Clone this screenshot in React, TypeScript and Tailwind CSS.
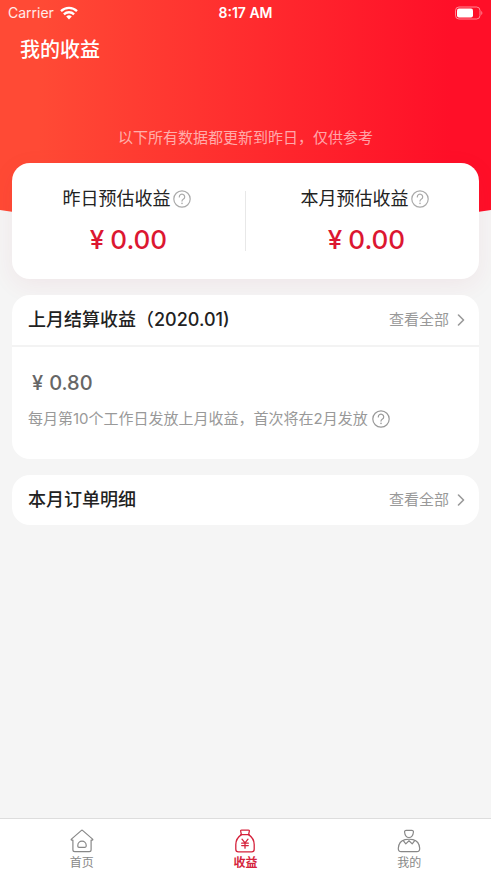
import { useState } from 'react'
import type { ReactNode } from 'react'

type TabKey = 'home' | 'income' | 'mine'

const HelpIcon = () => (
  <svg className="h-[18px] w-[18px]" viewBox="0 0 18 18" fill="none" stroke="currentColor" strokeWidth={1.2} strokeLinecap="round" strokeLinejoin="round">
    <circle cx="9" cy="9" r="8.2" />
    <path d="M6.3 6.9a2.7 2.7 0 1 1 4.200 2.200c-1 .600-1.500 1-1.500 2" />
    <path d="M9 13.3v.2" strokeWidth={1.5} />
  </svg>
)

const ChevronIcon = () => (
  <svg className="h-3 w-2" viewBox="0 0 8 12" fill="none" stroke="currentColor" strokeWidth={1.6} strokeLinecap="round" strokeLinejoin="round">
    <path d="M1.5 1 6.5 6l-5 5" />
  </svg>
)

const HomeIcon = () => (
  <svg className="h-6 w-6" viewBox="0 0 24 24" fill="none" stroke="currentColor" strokeWidth={1.2} strokeLinecap="round" strokeLinejoin="round">
    <path d="M11.2 1.6a1.2 1.2 0 0 1 1.6 0l9.8 8.5c.5.5.3 1.1-.4 1.1h-1.1v9.6c0 1.2-.7 1.9-1.9 1.9H4.8c-1.2 0-1.9-.7-1.9-1.9v-9.6H1.8c-.7 0-.9-.6-.4-1.1Z" />
    <path d="M9 18.3c-.8 0-1.2-.4-1.2-1.2v-.7a4.2 4.2 0 0 1 8.4 0v.7c0 .8-.4 1.2-1.2 1.2Z" />
  </svg>
)

const MoneyBagIcon = () => (
  <svg className="h-6 w-6" viewBox="0 0 24 24" fill="none" stroke="currentColor" strokeWidth={1.3} strokeLinecap="round" strokeLinejoin="round">
    <path d="M8.4 5.6 7.7 2.4c-.2-.8.1-1.3.9-1.3h6.8c.8 0 1.1.5.9 1.3l-.7 3.2" />
    <path d="M7.9 5.6h8.2" />
    <path d="M8.4 5.6C4.8 8 2.8 11.6 2.8 15.6v4.6c0 1.7.9 2.6 2.6 2.6h13.2c1.7 0 2.6-.9 2.6-2.6v-4.6c0-4-2-7.6-5.6-10" />
    <path d="m9 10.2 3 3.6 3-3.6M12 13.8v5.4M8.7 14.2h6.6M8.7 16.6h6.6" />
  </svg>
)

const UserIcon = () => (
  <svg className="h-6 w-6" viewBox="0 0 24 24" fill="none" stroke="currentColor" strokeWidth={1.2} strokeLinecap="round" strokeLinejoin="round">
    <path d="M9.3 1.3h5.4c1.3 0 1.9.7 1.7 1.9-.3 2.7-1.7 5.3-4.4 5.3S7.9 5.9 7.6 3.2c-.2-1.2.4-1.9 1.7-1.9Z" />
    <path d="M8 10.7c-4 1-6.4 4.4-6.7 8.6-.1 2.2.9 3.4 3 3.4h15.4c2.1 0 3.1-1.2 3-3.4-.3-4.2-2.7-7.6-6.7-8.6-2.6-.6-5.4-.6-8 0Z" />
    <path d="m6.3 11.7 2.5 3.2L12 11.8l3.2 3.1 2.5-3.2" />
  </svg>
)

const StatusBar = () => (
  <div className="grid h-[26px] grid-cols-3 items-center px-2 text-sm leading-6">
    <div className="flex items-center gap-1.5">
      <span className="text-white/90">Carrier</span>
      <svg className="h-3.5 w-[18px]" viewBox="0 0 18 14" fill="none" stroke="currentColor" strokeWidth={2.3}>
        <path d="M1 5.1a11.5 11.5 0 0 1 16 0" />
        <path d="M3.9 8.3a7.4 7.4 0 0 1 10.2 0" />
        <path d="M9 13.4 6.2 10.6a4.2 4.2 0 0 1 5.6 0Z" fill="currentColor" stroke="none" />
      </svg>
    </div>
    <span className="text-center font-semibold">8:17 AM</span>
    <svg className="h-3.5 w-7 justify-self-end" viewBox="0 0 28 14" fill="none">
      <rect x="0.5" y="1" width="24.5" height="12" rx="3.5" stroke="white" strokeOpacity={0.5} />
      <rect x="2" y="2.5" width="16" height="9" rx="2" fill="white" />
      <path d="M26.3 5v4c1.4-.8 1.4-3.2 0-4Z" fill="white" fillOpacity={0.5} />
    </svg>
  </div>
)

const EstimateItem = ({ label, amount }: { label: string; amount: string }) => (
  <div className="flex flex-1 flex-col items-center">
    <div className="flex items-center gap-0.5">
      <span className="text-lg leading-6 text-[#222]">{label}</span>
      <button type="button" aria-label={`${label}说明`} className="text-[#aaa]">
        <HelpIcon />
      </button>
    </div>
    <p className="mt-3 flex items-baseline gap-1.5 pl-1 text-[26px] leading-[34px] font-medium text-[#dc1731]">
      <span>¥</span>
      <span>{amount}</span>
    </p>
  </div>
)

const SectionHeader = ({ title }: { title: string }) => (
  <div className="flex h-[50px] items-center justify-between pr-3.5 pl-4">
    <h2 className="text-lg leading-6 font-medium text-[#222]">{title}</h2>
    <a href="#all" className="flex items-center gap-2 text-[15px] leading-6 text-[#999]">
      查看全部
      <ChevronIcon />
    </a>
  </div>
)

const tabs: { key: TabKey; label: string; icon: ReactNode }[] = [
  { key: 'home', label: '首页', icon: <HomeIcon /> },
  { key: 'income', label: '收益', icon: <MoneyBagIcon /> },
  { key: 'mine', label: '我的', icon: <UserIcon /> },
]

const App = () => {
  const [activeTab, setActiveTab] = useState<TabKey>('income')

  return (
    <div className="flex min-h-screen flex-col bg-[#f5f5f5] font-[Inter,'Noto_Sans_CJK_SC',sans-serif]">
      <header className="relative isolate overflow-hidden pb-[72px] text-white">
        <svg className="absolute inset-0 -z-10 h-full w-full" viewBox="0 0 491 222" preserveAspectRatio="none">
          <defs>
            <linearGradient id="headerFill" x1="0" y1="0" x2="1" y2="0">
              <stop offset="0.08" stopColor="#ff4a35" />
              <stop offset="0.92" stopColor="#ff0f28" />
            </linearGradient>
          </defs>
          <path d="M0 0H491V210Q245 250 0 210Z" fill="url(#headerFill)" />
        </svg>
        <StatusBar />
        <h1 className="mt-2.5 px-5 text-xl leading-7 font-medium">我的收益</h1>
        <p className="mt-[62px] text-center text-[15px] leading-6 text-white/60">以下所有数据都更新到昨日，仅供参考</p>
      </header>

      <main className="z-10 -mt-[59px] flex flex-1 flex-col gap-4 px-3">
        <section className="flex h-[116px] items-start rounded-[18px] bg-white pt-6 shadow-[0_6px_24px_rgba(170,40,70,0.07)]">
          <EstimateItem label="昨日预估收益" amount="0.00" />
          <div className="mx-1 mt-1 h-[60px] w-px bg-[#e8e8e8]" />
          <EstimateItem label="本月预估收益" amount="0.00" />
        </section>

        <section className="rounded-[18px] bg-white">
          <SectionHeader title="上月结算收益（2020.01)" />
          <div className="border-t-2 border-[#f3f3f3] px-4 pt-5 pb-7">
            <p className="flex items-baseline gap-1.5 px-1 text-xl leading-8 font-medium text-[#666]">
              <span>¥</span>
              <span>0.80</span>
            </p>
            <div className="mt-2 flex items-center gap-1 text-[#999]">
              <span className="text-[15px] leading-6">每月第10个工作日发放上月收益，首次将在2月发放</span>
              <button type="button" aria-label="发放说明">
                <HelpIcon />
              </button>
            </div>
          </div>
        </section>

        <section className="rounded-[18px] bg-white">
          <SectionHeader title="本月订单明细" />
        </section>
      </main>

      <nav className="grid h-[59px] grid-cols-3 border-t border-[#ddd] bg-white pt-1">
        {tabs.map((tab) => (
          <button
            key={tab.key}
            type="button"
            onClick={() => setActiveTab(tab.key)}
            className={`flex flex-col items-center justify-center gap-0.5 text-xs leading-4 ${
              activeTab === tab.key ? 'font-bold text-[#d5233c]' : 'text-[#888]'
            }`}
          >
            {tab.icon}
            {tab.label}
          </button>
        ))}
      </nav>
    </div>
  )
}

export default App
